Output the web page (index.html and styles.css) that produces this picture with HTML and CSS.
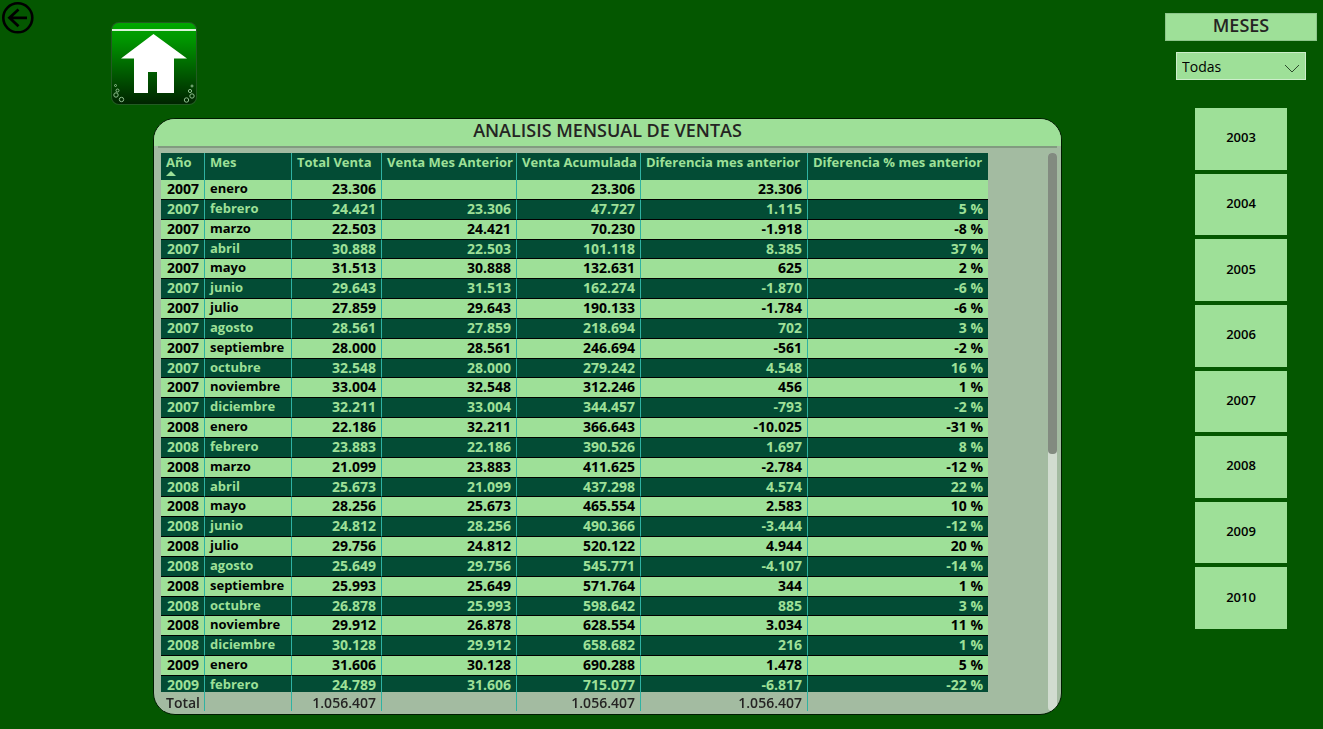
FILE: index.html
```html
<!DOCTYPE html>
<html lang="es">
<head>
<meta charset="utf-8">
<meta name="viewport" content="width=device-width, initial-scale=1">
<title>Analisis mensual de ventas</title>
<link rel="stylesheet" href="styles.css">
</head>
<body>
<div class="report">
  <main class="main">
    <nav class="toolbar">
      <button class="back" type="button" aria-label="Volver">
        <svg viewBox="0 0 32 32" width="32" height="32" fill="none" stroke="#000">
          <circle cx="15.800" cy="15.800" r="14.500" stroke-width="2.600"/>
          <path d="M25 15.800H7.500M16.500 7.500L7.500 15.800l9 8.500" stroke-width="2.800"/>
        </svg>
      </button>
      <a class="home" href="#" aria-label="Inicio">
        <svg viewBox="0 0 87 84" width="87" height="84">
          <defs>
            <linearGradient id="homeFill" x1="0" y1="0" x2="0" y2="1">
              <stop offset="0" stop-color="#00a800"/>
              <stop offset=".2" stop-color="#009600"/>
              <stop offset="1" stop-color="#002400"/>
            </linearGradient>
          </defs>
          <rect x="1" y="1" width="86" height="83" rx="8" fill="#2a5c2a" opacity=".8"/>
          <rect x="2" y="2" width="84" height="81" rx="7" fill="url(#homeFill)"/>
          <rect x="2" y="8" width="84" height="2" fill="#d8f5d8"/>
          <path d="M43.500 13L77 37.500H64V72H47V51h-9v21H24V37.500H11z" fill="#fff"/>
          <g fill="none" stroke="#8fbf8f" stroke-width="1">
            <circle cx="5.500" cy="64.500" r="1"/><circle cx="7.500" cy="69.500" r="1.500"/>
            <circle cx="6" cy="74" r="2.200"/><circle cx="11.500" cy="78.500" r="2.200"/>
            <circle cx="82" cy="65" r="1"/><circle cx="80" cy="70" r="1.600"/>
            <circle cx="82" cy="75" r="2.200"/><circle cx="76.500" cy="79" r="2.200"/>
          </g>
        </svg>
      </a>
    </nav>
    <section class="panel" aria-labelledby="panel-title">
      <h1 class="panel-title" id="panel-title">ANALISIS MENSUAL DE VENTAS</h1>
      <div class="panel-body">
        <div class="table-view">
          <table class="sales">
            <colgroup>
              <col class="c-year"><col class="c-month"><col class="c-total"><col class="c-prev"><col class="c-acc"><col class="c-diff"><col class="c-pct">
            </colgroup>
            <thead>
              <tr><th scope="col" aria-sort="ascending">Año<span class="sort"></span></th><th scope="col">Mes</th><th scope="col">Total Venta</th><th scope="col">Venta Mes Anterior</th><th scope="col">Venta Acumulada</th><th scope="col">Diferencia mes anterior</th><th scope="col">Diferencia % mes anterior</th></tr>
            </thead>
            <tbody>
              <tr><td>2007</td><td>enero</td><td>23.306</td><td></td><td>23.306</td><td>23.306</td><td></td></tr>
              <tr><td>2007</td><td>febrero</td><td>24.421</td><td>23.306</td><td>47.727</td><td>1.115</td><td>5 %</td></tr>
              <tr><td>2007</td><td>marzo</td><td>22.503</td><td>24.421</td><td>70.230</td><td>-1.918</td><td>-8 %</td></tr>
              <tr><td>2007</td><td>abril</td><td>30.888</td><td>22.503</td><td>101.118</td><td>8.385</td><td>37 %</td></tr>
              <tr><td>2007</td><td>mayo</td><td>31.513</td><td>30.888</td><td>132.631</td><td>625</td><td>2 %</td></tr>
              <tr><td>2007</td><td>junio</td><td>29.643</td><td>31.513</td><td>162.274</td><td>-1.870</td><td>-6 %</td></tr>
              <tr><td>2007</td><td>julio</td><td>27.859</td><td>29.643</td><td>190.133</td><td>-1.784</td><td>-6 %</td></tr>
              <tr><td>2007</td><td>agosto</td><td>28.561</td><td>27.859</td><td>218.694</td><td>702</td><td>3 %</td></tr>
              <tr><td>2007</td><td>septiembre</td><td>28.000</td><td>28.561</td><td>246.694</td><td>-561</td><td>-2 %</td></tr>
              <tr><td>2007</td><td>octubre</td><td>32.548</td><td>28.000</td><td>279.242</td><td>4.548</td><td>16 %</td></tr>
              <tr><td>2007</td><td>noviembre</td><td>33.004</td><td>32.548</td><td>312.246</td><td>456</td><td>1 %</td></tr>
              <tr><td>2007</td><td>diciembre</td><td>32.211</td><td>33.004</td><td>344.457</td><td>-793</td><td>-2 %</td></tr>
              <tr><td>2008</td><td>enero</td><td>22.186</td><td>32.211</td><td>366.643</td><td>-10.025</td><td>-31 %</td></tr>
              <tr><td>2008</td><td>febrero</td><td>23.883</td><td>22.186</td><td>390.526</td><td>1.697</td><td>8 %</td></tr>
              <tr><td>2008</td><td>marzo</td><td>21.099</td><td>23.883</td><td>411.625</td><td>-2.784</td><td>-12 %</td></tr>
              <tr><td>2008</td><td>abril</td><td>25.673</td><td>21.099</td><td>437.298</td><td>4.574</td><td>22 %</td></tr>
              <tr><td>2008</td><td>mayo</td><td>28.256</td><td>25.673</td><td>465.554</td><td>2.583</td><td>10 %</td></tr>
              <tr><td>2008</td><td>junio</td><td>24.812</td><td>28.256</td><td>490.366</td><td>-3.444</td><td>-12 %</td></tr>
              <tr><td>2008</td><td>julio</td><td>29.756</td><td>24.812</td><td>520.122</td><td>4.944</td><td>20 %</td></tr>
              <tr><td>2008</td><td>agosto</td><td>25.649</td><td>29.756</td><td>545.771</td><td>-4.107</td><td>-14 %</td></tr>
              <tr><td>2008</td><td>septiembre</td><td>25.993</td><td>25.649</td><td>571.764</td><td>344</td><td>1 %</td></tr>
              <tr><td>2008</td><td>octubre</td><td>26.878</td><td>25.993</td><td>598.642</td><td>885</td><td>3 %</td></tr>
              <tr><td>2008</td><td>noviembre</td><td>29.912</td><td>26.878</td><td>628.554</td><td>3.034</td><td>11 %</td></tr>
              <tr><td>2008</td><td>diciembre</td><td>30.128</td><td>29.912</td><td>658.682</td><td>216</td><td>1 %</td></tr>
              <tr><td>2009</td><td>enero</td><td>31.606</td><td>30.128</td><td>690.288</td><td>1.478</td><td>5 %</td></tr>
              <tr><td>2009</td><td>febrero</td><td>24.789</td><td>31.606</td><td>715.077</td><td>-6.817</td><td>-22 %</td></tr>
            </tbody>
            <tfoot>
              <tr><td>Total</td><td></td><td>1.056.407</td><td></td><td>1.056.407</td><td>1.056.407</td><td></td></tr>
            </tfoot>
          </table>
        </div>
        <div class="track"><div class="thumb"></div></div>
      </div>
    </section>
  </main>
  <aside class="filters">
    <h2 class="filters-title"><label for="month">MESES</label></h2>
    <div class="month-box">
      <select class="month" id="month"><option>Todas</option></select>
      <svg class="chevron" viewBox="0 0 16 10" width="16" height="10" fill="none" stroke="#2c4a2c"><path d="M1 1l7 7 7-7"/></svg>
    </div>
    <div class="years">
      <button type="button">2003</button>
      <button type="button">2004</button>
      <button type="button">2005</button>
      <button type="button">2006</button>
      <button type="button">2007</button>
      <button type="button">2008</button>
      <button type="button">2009</button>
      <button type="button">2010</button>
    </div>
  </aside>
</div>
</body>
</html>
```
FILE: styles.css
```css
:root {
  --page: #045700;
  --light: #9ee098;
  --dark: #034c35;
  --panel: #a3bba1;
  --line: #2fb2a2;
}
* { box-sizing: border-box; }
body {
  margin: 0;
  background: var(--page);
  color: #000;
  font-family: "Trebuchet MS", "Open Sans", sans-serif;
  font-size: 14px;
}
.report {
  display: flex;
  gap: 104px;
  height: 100vh;
  padding-right: 6px;
}
.main {
  flex: 1;
  display: flex;
  flex-direction: column;
  min-width: 0;
  padding-bottom: 14px;
}
.toolbar {
  display: flex;
  align-items: flex-start;
  gap: 76px;
  height: 118px;
  padding: 2px;
}
.back {
  padding: 0;
  border: 0;
  background: none;
}
.back svg, .home svg { display: block; }
.home { padding-top: 19px; }

.panel {
  flex: 1;
  display: flex;
  flex-direction: column;
  min-height: 0;
  margin-left: 153px;
  border: 1px solid #001c00;
  border-radius: 22px;
  background: var(--panel);
  overflow: hidden;
}
.panel-title {
  margin: 0;
  background: var(--light);
  color: #252423;
  font-size: 18px;
  font-weight: 600;
  line-height: 22px;
  padding-bottom: 5px;
  text-align: center;
}
.panel-body {
  flex: 1;
  display: flex;
  justify-content: space-between;
  min-height: 0;
  margin: 0 4px;
  padding: 5px 0 3px 3px;
  border-top: 2px solid #829b80;
}
.table-view { overflow: hidden; }
.sales {
  table-layout: fixed;
  width: 827px;
  border-spacing: 0;
  font-weight: 700;
}
.c-year { width: 44px; }
.c-month { width: 87px; }
.c-total { width: 90px; }
.c-prev { width: 135px; }
.c-acc { width: 124px; }
.c-diff { width: 167px; }
.c-pct { width: 180px; }
.sales th, .sales td {
  padding: 0 5px;
  border-right: 1px solid var(--line);
  line-height: 17px;
  text-align: right;
  vertical-align: top;
  white-space: nowrap;
}
.sales tr > :last-child { border-right: 0; }
.sales td:nth-child(2) {
  font-size: 13px;
  text-align: left;
}
.sales th {
  height: 27px;
  background: var(--dark);
  color: var(--light);
  font-size: 13px;
  line-height: 18px;
  text-align: left;
}
.sort {
  display: block;
  width: 0;
  border: 5px solid transparent;
  border-top: 0;
  border-bottom-color: var(--light);
}
.sales tbody td {
  height: 20px;
  border-bottom: 1px solid #000;
  background: var(--light);
}
.sales tbody tr:nth-child(6n+4) td { height: 19px; }
.sales tbody tr:nth-child(even) td {
  background: var(--dark);
  color: var(--light);
}
.sales tfoot td {
  position: sticky;
  bottom: 0;
  height: 19px;
  background: var(--panel);
  color: #252423;
  font-weight: 600;
  vertical-align: bottom;
}
.track {
  width: 9px;
  border-radius: 4px;
  background: #d1dcd0;
}
.thumb {
  height: 54%;
  border-radius: 4px;
  background: #828b80;
}

.filters {
  display: flex;
  flex-direction: column;
  align-items: center;
  width: 152px;
  margin-left: -1px;
  padding-top: 13px;
}
.filters-title {
  width: 100%;
  margin: 0 0 11px;
  padding-bottom: 3px;
  border: 1px solid #8cc58a;
  background: var(--light);
  color: #252423;
  font-size: 18px;
  font-weight: 600;
  line-height: 23px;
  text-align: center;
}
.month-box {
  position: relative;
  width: 130px;
  margin-bottom: 28px;
}
.month {
  appearance: none;
  display: block;
  width: 100%;
  height: 28px;
  padding: 0 5px;
  border: 1px solid #cdeecb;
  border-radius: 0;
  background: var(--light);
  color: #000;
  font: inherit;
}
.chevron {
  position: absolute;
  right: 6px;
  top: 12px;
  pointer-events: none;
}
.years {
  display: grid;
  grid-auto-rows: 1fr;
  gap: 4px;
  width: 92px;
  height: 521px;
}
.years button {
  padding: 0 0 3px;
  border: 0;
  background: var(--light);
  color: #000;
  font: inherit;
  font-weight: 600;
  font-size: 13px;
}
```
